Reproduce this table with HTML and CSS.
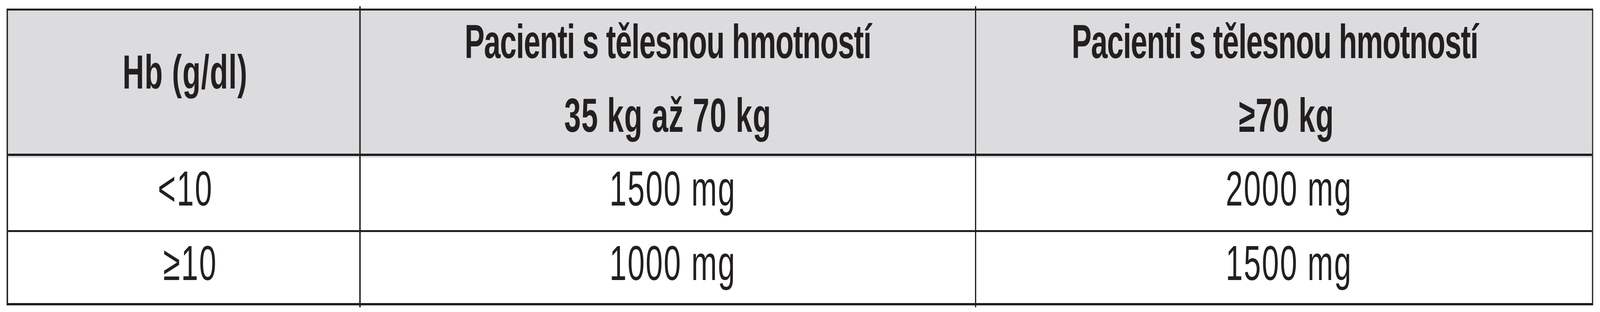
FILE: index.html
```html
<!DOCTYPE html>
<html lang="cs">
<head>
<meta charset="utf-8">
<title>Dávkování podle Hb a tělesné hmotnosti</title>
<link rel="stylesheet" href="styles.css">
</head>
<body>
<div class="frame">
  <div class="stage">
    <div class="dose-table">
      <div class="cell head c1"><div class="line">Hb (g/dl)</div></div>
      <div class="cell head c2 multi"><div class="line tight">Pacienti s tělesnou hmotností</div><div class="line">35 kg až 70 kg</div></div>
      <div class="cell head c3 multi"><div class="line tight left">Pacienti s tělesnou hmotností</div><div class="line shift">≥70 kg</div></div>

      <div class="cell data r1 c1"><div class="line">&lt;10</div></div>
      <div class="cell data r1 c2"><div class="line">1500 mg</div></div>
      <div class="cell data r1 c3"><div class="line">2000 mg</div></div>

      <div class="cell data r2 c1 last"><div class="line ge">≥10</div></div>
      <div class="cell data r2 c2 last"><div class="line">1000 mg</div></div>
      <div class="cell data r2 c3 last"><div class="line">1500 mg</div></div>
    </div>
  </div>
</div>
</body>
</html>
```

FILE: styles.css
```css
* { box-sizing: border-box; }

html, body {
  margin: 0;
  padding: 0;
  background: #ffffff;
  overflow: hidden;
}

body {
  font-family: "Liberation Sans", Arial, sans-serif;
  color: #231f20;
}

.frame {
  width: 100vw;
  height: 800px;
  overflow: hidden;
}

/* the sheet is drawn on a 6556px-wide canvas and fitted to the window width */
.stage {
  width: 6556px;
  height: 800px;
  padding: 22px 0 0 27px;
  transform-origin: 0 0;
  transform: scaleX(0.62477);
  transform: scaleX(calc(100vw / 6556px));
}

.dose-table {
  display: grid;
  width: 6501px;
  grid-template-columns: 1439px 2523px 2528px;
  grid-template-rows: 367px 196px 187px;
  border-top: 5px solid #231f20;
  border-left: 6px solid #231f20;
  border-right: 5px solid #231f20;
  border-bottom: 6px solid #231f20;
}

.cell {
  position: relative;
  display: flex;
  flex-direction: column;
  align-items: center;
  text-align: center;
  white-space: nowrap;
}

.c2 { border-left: 6px solid #231f20; }
.c3 { border-left: 5px solid #231f20; }

/* inner dividers poke out above the top rule and below the bottom rule */
.head.c2::before,
.head.c3::before,
.last.c2::after,
.last.c3::after {
  content: "";
  position: absolute;
  background: #231f20;
  height: 6px;
}
.head.c2::before { top: -11px; left: -6px; width: 6px; }
.head.c3::before { top: -11px; left: -5px; width: 5px; }
.last.c2::after { bottom: -11px; left: -6px; width: 6px; height: 5px; }
.last.c3::after { bottom: -11px; left: -5px; width: 5px; height: 5px; }

.head {
  background: #dcdcde;
  font-weight: 700;
  font-size: 122px;
  line-height: 140px;
  letter-spacing: 2px;
}

.head .tight { letter-spacing: -2.2px; }
.head .left { padding-right: 76px; }
.head .shift { padding-left: 20px; }

.head.c1 { padding-top: 88px; padding-left: 12px; }
.head.multi { padding-top: 10px; gap: 49px; }

.data {
  font-weight: 400;
  font-size: 126px;
  line-height: 140px;
  letter-spacing: 4px;
  padding-left: 40px;
}
.data.c1 { padding-left: 14px; }
.data .ge { padding-left: 40px; }

.r1 {
  border-top: 6px solid #231f20;
  padding-top: 14px;
  box-shadow: inset 0 5px 0 #e3e3e5;
}

.r2 {
  border-top: 5px solid #231f20;
  padding-top: 10px;
}
```
